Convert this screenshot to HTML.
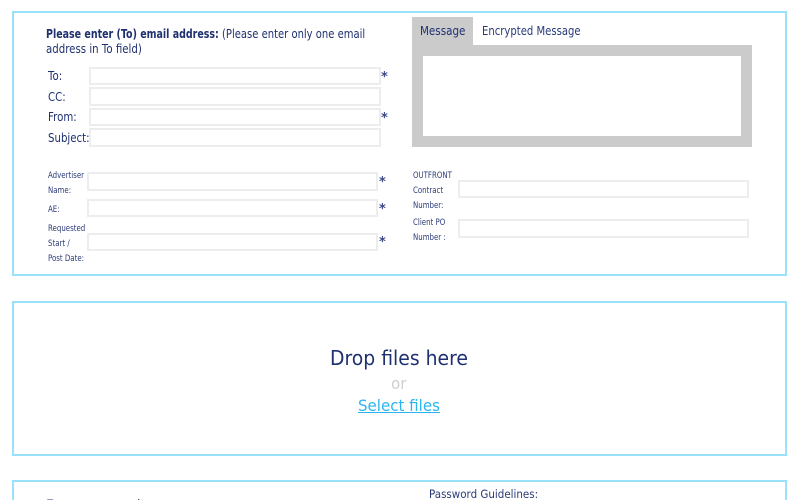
<!DOCTYPE html>
<html><head><meta charset="utf-8"><style>
html,body{margin:0;padding:0;background:#fff;width:800px;height:500px;overflow:hidden}
body{position:relative;font-family:"DejaVu Sans",sans-serif;color:#1f3070}
#w{position:absolute;left:0;top:0;width:800px;height:500px;filter:blur(.3px)}
.b{position:absolute;box-sizing:border-box;border:2px solid #9ae1fb}
.i{position:absolute;box-sizing:border-box;border:2px solid #ededed;background:#fff}
.t{position:absolute;white-space:nowrap;font-size:12px;line-height:16px;transform:scaleX(.85);transform-origin:left top}
.s{position:absolute;white-space:nowrap;font-size:8.5px;line-height:12px;color:#2a3a78;transform:scaleX(.825);transform-origin:left top}
.a{position:absolute;font-size:13px;line-height:14px;color:#3a4a85;font-weight:bold}
</style></head><body><div id="w">
<div class="b" style="left:12px;top:11px;width:775px;height:265px"></div>
<div class="b" style="left:12px;top:300.500px;width:775px;height:155px"></div>
<div class="b" style="left:12px;top:480px;width:775px;height:40px"></div>

<div class="t" style="left:46px;top:26px;transform:scaleX(.79)"><b>Please enter (To) email address:</b></div>
<div class="t" style="left:222px;top:26px;transform:scaleX(.834)">(Please enter only one email</div>
<div class="t" style="left:46px;top:41px">address in To field)</div>

<div class="t" style="left:48px;top:68px">To:</div>
<div class="t" style="left:48px;top:89px">CC:</div>
<div class="t" style="left:48px;top:109px">From:</div>
<div class="t" style="left:48px;top:130px">Subject:</div>
<div class="i" style="left:89px;top:67px;width:292px;height:18px"></div>
<div class="i" style="left:89px;top:87px;width:292px;height:19px"></div>
<div class="i" style="left:89px;top:108px;width:292px;height:18px"></div>
<div class="i" style="left:89px;top:128px;width:292px;height:19px"></div>
<div class="a" style="left:381px;top:71px">*</div>
<div class="a" style="left:381px;top:112px">*</div>

<div style="position:absolute;left:412px;top:17px;width:61px;height:29px;background:#cbcbcb"></div>
<div style="position:absolute;left:412px;top:45px;width:340px;height:102px;background:#cbcbcb"></div>
<div style="position:absolute;left:423px;top:56px;width:318px;height:80px;background:#fff"></div>
<div class="t" style="left:420px;top:23px;transform:scaleX(.863)">Message</div>
<div class="t" style="left:482px;top:23px;color:#2a3a78;transform:scaleX(.839)">Encrypted Message</div>

<div class="s" style="left:48px;top:170px">Advertiser</div>
<div class="s" style="left:48px;top:185px">Name:</div>
<div class="s" style="left:48px;top:204px">AE:</div>
<div class="s" style="left:48px;top:223px">Requested</div>
<div class="s" style="left:48px;top:238px">Start /</div>
<div class="s" style="left:48px;top:253px">Post Date:</div>
<div class="i" style="left:87px;top:172px;width:291px;height:19px"></div>
<div class="i" style="left:87px;top:199px;width:291px;height:18px"></div>
<div class="i" style="left:87px;top:233px;width:291px;height:18px"></div>
<div class="a" style="left:379px;top:176px">*</div>
<div class="a" style="left:379px;top:203px">*</div>
<div class="a" style="left:379px;top:236px">*</div>

<div class="s" style="left:413px;top:170px">OUTFRONT</div>
<div class="s" style="left:413px;top:185px">Contract</div>
<div class="s" style="left:413px;top:200px">Number:</div>
<div class="s" style="left:413px;top:217px">Client PO</div>
<div class="s" style="left:413px;top:232px">Number :</div>
<div class="i" style="left:458px;top:180px;width:291px;height:18px"></div>
<div class="i" style="left:458px;top:219px;width:291px;height:19px"></div>

<div class="t" style="left:330px;top:346px;font-size:20px;line-height:24px;transform:scaleX(.94);color:#1f3070">Drop files here</div>
<div class="t" style="left:391px;top:374px;font-size:16px;line-height:20px;transform:scaleX(.94);color:#cfcfcf">or</div>
<div class="t" style="left:358px;top:396px;font-size:16px;line-height:20px;transform:scaleX(.94);color:#2bb5f0;text-decoration:underline">Select files</div>

<div class="t" style="left:46px;top:498px;font-size:14px;transform:scaleX(.87)">Enter password:</div>
<div class="t" style="left:429px;top:486px;font-size:11.500px;transform:scaleX(.896);color:#2a3a78">Password Guidelines:</div>
</div></body></html>
